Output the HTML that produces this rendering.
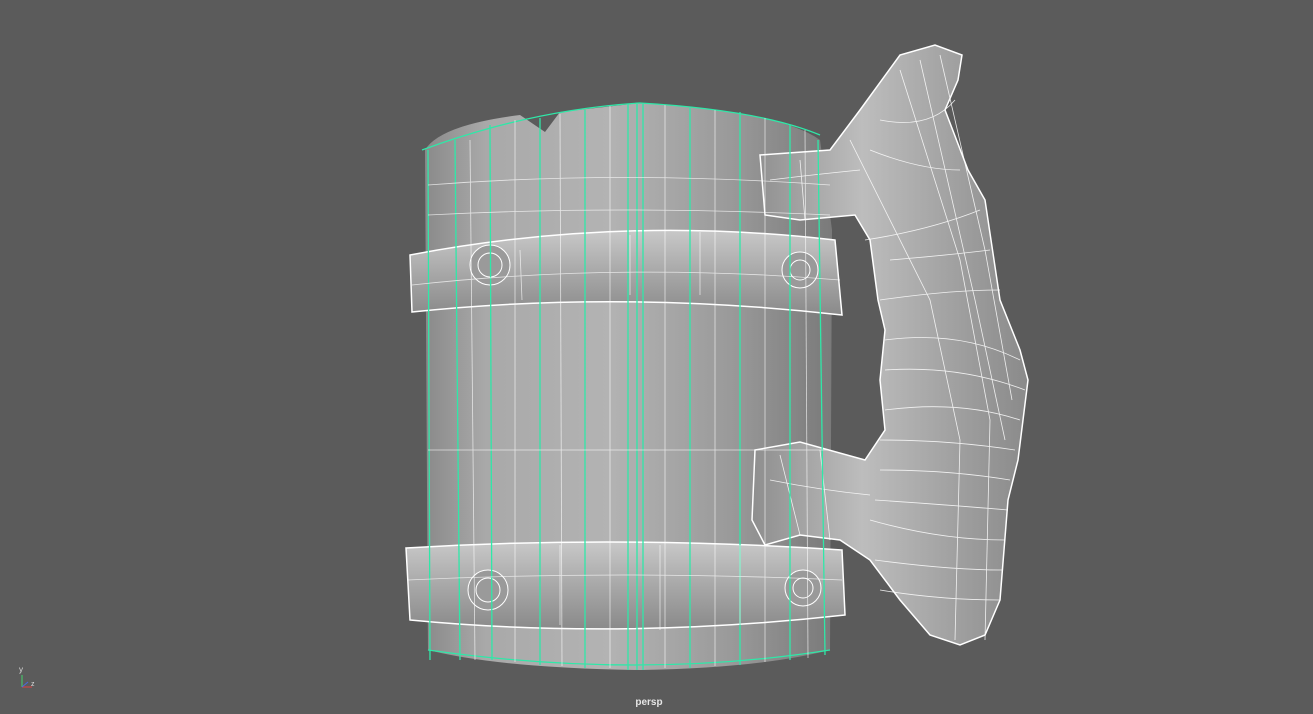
<!DOCTYPE html>
<html><head><meta charset="utf-8"><style>
html,body{margin:0;padding:0;background:#5b5b5b;width:1313px;height:714px;overflow:hidden}
svg{display:block}
text{font-family:"Liberation Sans",sans-serif}
</style></head><body>
<svg width="1313" height="714" viewBox="0 0 1313 714" xmlns="http://www.w3.org/2000/svg">
<defs>
<linearGradient id="body" x1="0" x2="1" y1="0" y2="0">
<stop offset="0" stop-color="#8a8a8a"/><stop offset="0.15" stop-color="#a9a9a9"/>
<stop offset="0.45" stop-color="#b3b3b3"/><stop offset="0.75" stop-color="#9a9a9a"/>
<stop offset="1" stop-color="#7a7a7a"/></linearGradient>
<linearGradient id="band" x1="0" x2="0" y1="0" y2="1">
<stop offset="0" stop-color="#c8c8c8"/><stop offset="0.5" stop-color="#a8a8a8"/><stop offset="1" stop-color="#8a8a8a"/></linearGradient>
<linearGradient id="hand" x1="0" x2="1" y1="0" y2="0">
<stop offset="0" stop-color="#8e8e8e"/><stop offset="0.4" stop-color="#bdbdbd"/><stop offset="1" stop-color="#8a8a8a"/></linearGradient>
</defs>
<rect width="1313" height="714" fill="#5b5b5b"/>
<!-- body -->
<path d="M425 150 Q440 125 520 115 L545 132 L560 112 L640 103 L700 108 Q790 118 820 140 L832 230 L830 650 Q760 668 640 670 Q500 668 428 650 Z" fill="url(#body)"/>
<!-- handle -->
<path d="M760 155 L830 150 L860 110 L900 55 L935 45 L962 55 L958 80 L945 110 L968 170 L985 200 L1000 300 L1020 350 L1028 380 L1018 460 L1008 500 L1000 600 L985 635 L960 645 L930 635 L900 600 L870 560 L840 540 L800 535 L765 545 L752 520 L755 450 L800 442 L865 460 L885 430 L880 380 L885 330 L878 300 L870 240 L855 215 L800 220 L765 215 Z" fill="url(#hand)" stroke="#fff" stroke-width="1.5"/>
<g stroke="#fff" stroke-width="0.8" fill="none" opacity="0.85">
<path d="M870 150 Q920 170 960 170"/><path d="M865 240 Q930 230 980 210"/><path d="M880 300 Q950 290 1000 290"/>
<path d="M885 340 Q960 330 1020 360"/><path d="M885 410 Q960 400 1020 420"/><path d="M880 470 Q950 470 1010 480"/>
<path d="M870 520 Q940 540 1005 540"/><path d="M880 590 Q940 600 1000 600"/>
<path d="M900 70 L960 260 L990 420 L985 640"/><path d="M920 60 L975 300 L1005 440"/>
<path d="M850 140 L930 300 L960 440 L955 640"/><path d="M770 180 Q810 175 860 170"/><path d="M770 480 Q820 490 870 495"/>
<path d="M780 455 L800 535"/><path d="M820 450 L830 540"/><path d="M800 160 L805 220"/>
<path d="M880 120 Q930 130 955 100"/><path d="M890 260 Q950 255 990 250"/><path d="M885 370 Q960 365 1025 390"/>
<path d="M880 440 Q950 440 1015 450"/><path d="M875 500 Q950 505 1008 510"/><path d="M875 560 Q950 570 1002 570"/>
<path d="M940 55 L985 250 L1012 400"/>
</g>
<!-- bands -->
<path d="M410 255 Q620 215 835 240 L842 315 Q620 290 412 312 Z" fill="url(#band)" stroke="#fff" stroke-width="1.5"/>
<path d="M406 548 Q620 535 842 550 L845 615 Q620 640 410 620 Z" fill="url(#band)" stroke="#fff" stroke-width="1.5"/>
<g fill="#9a9a9a" stroke="#fff" stroke-width="1">
<circle cx="490" cy="265" r="20"/><circle cx="490" cy="265" r="12"/><circle cx="800" cy="270" r="18"/><circle cx="800" cy="270" r="10"/>
<circle cx="488" cy="590" r="20"/><circle cx="488" cy="590" r="12"/><circle cx="803" cy="588" r="18"/><circle cx="803" cy="588" r="10"/>
</g>
<!-- wire lines -->
<g stroke="#2fe8a8" stroke-width="1.3" fill="none">
<path d="M428 150 L430 660"/><path d="M455 140 L460 660"/><path d="M490 125 L492 660"/><path d="M540 118 L540 665"/>
<path d="M585 110 L585 668"/><path d="M628 104 L628 670"/><path d="M637 104 L637 670"/><path d="M643 104 L643 670"/>
<path d="M690 108 L690 668"/><path d="M740 112 L740 665"/><path d="M790 125 L790 660"/><path d="M818 140 L825 655"/>
<path d="M422 150 Q530 110 640 103 Q760 110 820 135"/><path d="M428 650 Q640 680 830 650"/>
</g>
<g stroke="#fff" stroke-width="0.8" fill="none" opacity="0.7">
<path d="M428 185 Q620 170 830 185"/><path d="M428 215 Q620 205 830 215"/><path d="M428 450 L830 450"/>
<path d="M412 285 Q620 262 840 280"/><path d="M408 580 Q620 570 842 580"/><path d="M520 250 L522 300"/><path d="M630 235 L630 295"/>
<path d="M700 232 L700 295"/><path d="M560 545 L560 625"/><path d="M660 545 L660 630"/><path d="M740 545 L740 625"/>
<path d="M470 140 L475 660"/><path d="M515 120 L515 662"/><path d="M560 114 L562 666"/><path d="M610 106 L610 668"/>
<path d="M665 105 L665 668"/><path d="M715 110 L715 666"/><path d="M765 118 L765 662"/><path d="M805 130 L808 658"/>
</g>
<!-- axis -->
<line x1="22" y1="687" x2="22" y2="675" stroke="#43d36c" stroke-width="1"/>
<line x1="22" y1="687" x2="32" y2="687" stroke="#e04040" stroke-width="1"/>
<line x1="22" y1="687" x2="28" y2="682" stroke="#4a6ae0" stroke-width="1"/>
<text x="19" y="672" font-size="8" fill="#ddd">y</text>
<text x="31" y="686" font-size="7" fill="#ddd">z</text>
<text x="649" y="705" font-size="10" font-weight="bold" fill="#e6e6e6" text-anchor="middle">persp</text>
</svg>
</body></html>
